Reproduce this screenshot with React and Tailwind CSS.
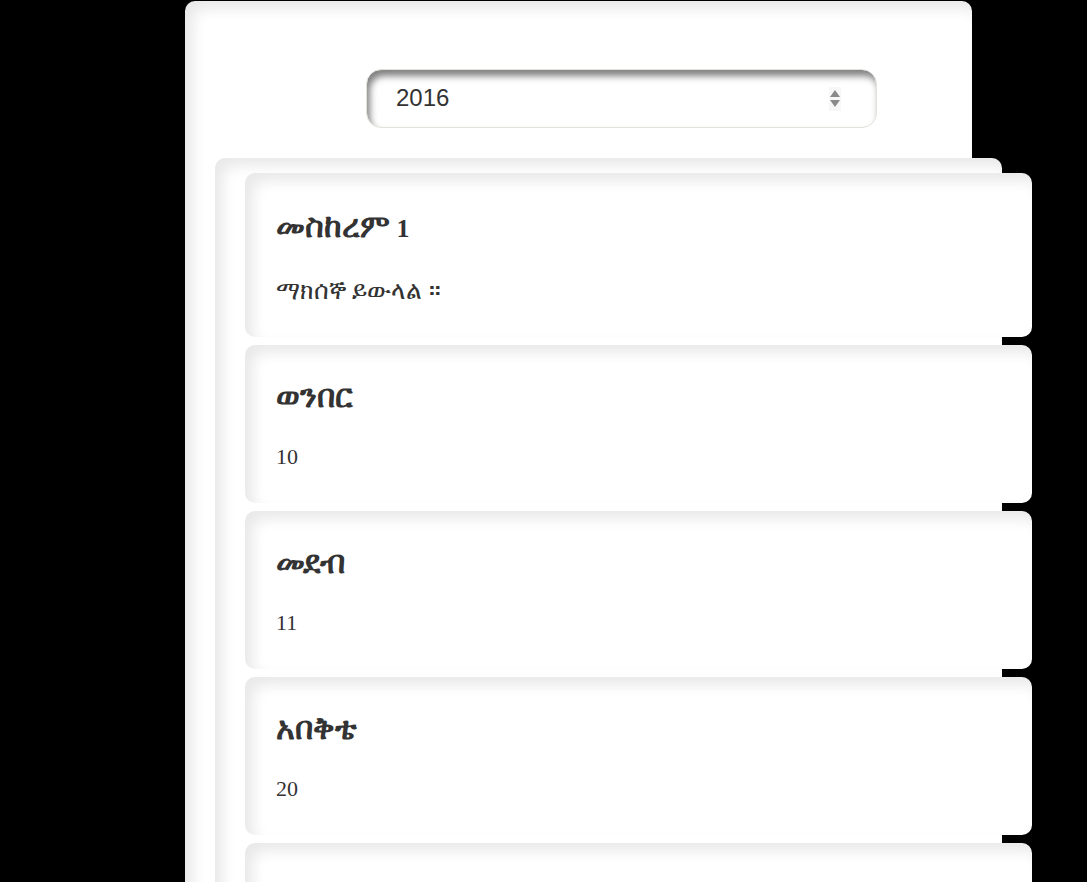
const items = [
  { title: 'መስከረም', num: ' 1', value: 'ማክሰኞ ይውላል ።', eth: true, first: true },
  { title: 'ወንበር', value: '10' },
  { title: 'መደብ', value: '11' },
  { title: 'አበቅቴ', value: '20' },
  { title: 'መጥቅዕ', value: '10' },
  { title: 'ዐበይት ጾም', value: '25', eth: false },
];

const Spinner = () => (
  <div className="flex flex-col items-center justify-center gap-[3px] w-[12px] h-[24px] bg-[#f7f7f7]">
    <svg width="10" height="7" viewBox="0 0 10 7">
      <path d="M5 0 L10 7 L0 7 Z" fill="#8a8a8a" />
    </svg>
    <svg width="10" height="7" viewBox="0 0 10 7">
      <path d="M0 0 L10 0 L5 7 Z" fill="#8a8a8a" />
    </svg>
  </div>
);

export default function App() {
  return (
    <div className="min-h-screen w-full bg-black overflow-hidden font-['Liberation_Serif',serif] text-[#333]">
      {/* panel */}
      <div className="ml-[185px] mt-[1px] w-[787px] bg-white rounded-[10px] shadow-[inset_8px_8px_14px_rgba(0,0,0,0.09)] pt-[68px]">
        {/* year picker */}
        <div className="ml-[181px] w-[511px] h-[59px] rounded-[15px] border border-[#e2e2dc] bg-white shadow-[inset_3px_6px_7px_rgba(0,0,0,0.5)] flex items-center justify-between pl-[29px] pr-[35px]">
          <span className="font-['Liberation_Sans',Arial,sans-serif] text-[24px] text-[#333] -mt-[2px]">2016</span>
          <Spinner />
        </div>

        {/* list */}
        <div className="mt-[30px] ml-[30px] w-[787px] bg-white rounded-[10px] shadow-[inset_8px_8px_14px_rgba(0,0,0,0.09)] pt-[15px] flex flex-col gap-[8px]">
          {items.map((it, i) => (
            <div
              key={i}
              className={`ml-[30px] w-[787px] bg-white rounded-[10px] shadow-[inset_8px_8px_14px_rgba(0,0,0,0.09)] px-[31px] pb-[33px] ${
                it.first ? 'pt-[38px]' : 'pt-[36px]'
              }`}
            >
              <h3 className="h-[30px] text-[26px] leading-[30px] font-bold whitespace-nowrap">
                <span className="text-[32px] leading-[30px]">{it.title}</span>
                {it.num}
              </h3>
              <p className={`h-[26px] text-[22px] leading-[26px] whitespace-nowrap ${it.first ? 'mt-[37px]' : 'mt-[33px]'}`}>
                {it.eth ? <span className="text-[25px] leading-[26px]">{it.value}</span> : it.value}
              </p>
            </div>
          ))}
        </div>
      </div>
    </div>
  );
}
